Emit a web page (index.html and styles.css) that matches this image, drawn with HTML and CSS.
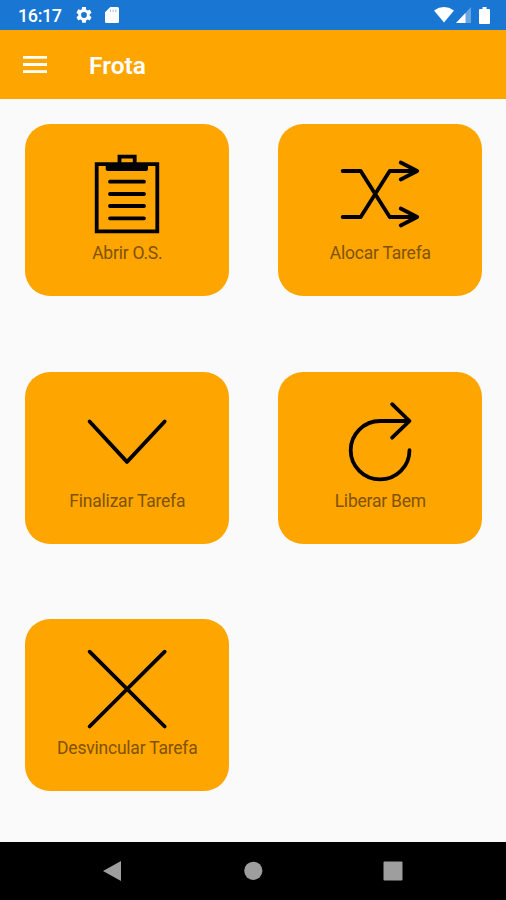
FILE: index.html
```
<!DOCTYPE html>
<html lang="pt-BR">
<head>
<meta charset="utf-8">
<title>Frota</title>
<link rel="stylesheet" href="styles.css">
</head>
<body>
<div class="status-bar">
  <span class="clock">16:17</span>
  <svg class="gear" viewBox="2 2 20 20"><path d="M19.14 12.94c.04-.3.06-.61.06-.94s-.02-.64-.07-.94l2.03-1.58a.49.49 0 0 0 .12-.61l-1.92-3.32a.49.49 0 0 0-.59-.22l-2.39.96a7 7 0 0 0-1.62-.94l-.36-2.54A.48.48 0 0 0 13.92 2h-3.84c-.24 0-.43.17-.47.41l-.36 2.54c-.59.24-1.13.57-1.62.94l-2.39-.96a.49.49 0 0 0-.59.22L2.74 8.87c-.12.21-.08.47.12.61l2.03 1.58a6 6 0 0 0 0 1.88l-2.03 1.58a.49.49 0 0 0-.12.61l1.92 3.32c.12.22.37.29.59.22l2.39-.96c.5.38 1.03.7 1.62.94l.36 2.54c.05.24.24.41.48.41h3.84c.24 0 .44-.17.47-.41l.36-2.54a7 7 0 0 0 1.62-.94l2.39.96c.22.08.47 0 .59-.22l1.92-3.32a.49.49 0 0 0-.12-.61zM12 15.6a3.6 3.6 0 1 1 0-7.2 3.6 3.6 0 0 1 0 7.2z"/></svg>
  <svg class="sd" viewBox="0 0 14 16"><path d="M5.3 0H12.5Q14 0 14 1.5V14.500Q14 16 12.500 16H1.500Q0 16 0 14.500V5.300Z"/><path class="slots" d="M5.500 2.500V5M8.200 2.500V5M10.900 2.500V5"/></svg>
  <span class="spacer"></span>
  <svg class="wifi" viewBox="0 0 20 16"><path d="M0 3.500Q10-3.300 20 3.500L10 15.500Z"/></svg>
  <svg class="signal" viewBox="0 0 15 16"><path class="faint" d="M15 0V16H0Z"/><path d="M9.500 5.900V16H0Z"/></svg>
  <svg class="battery" viewBox="0 0 11 17"><path d="M3.500 0H7.500V2H10Q11 2 11 3V16Q11 17 10 17H1Q0 17 0 16V3Q0 2 1 2H3.500Z"/></svg>
</div>
<header class="app-bar">
  <svg class="menu" viewBox="0 0 24 18"><path d="M0 0H24V2.800H0ZM0 7.100H24V9.900H0ZM0 14.200H24V17H0Z"/></svg>
  <h1>Frota</h1>
</header>
<main class="grid">
  <div class="card">
    <svg class="icon" viewBox="87.300 154 80 80"><path class="miter" d="M97 164.200H157.600V231.300H97ZM119.800 163V156.700H135V163"/><path class="solid" d="M106 163H148.300V169Q148.300 171 146.300 171H108Q106 171 106 169Z"/><path d="M110.300 181.700H144.300M110.300 194H144.300M110.300 206H144.300M110.300 218.300H144.300"/></svg>
    <span class="label">Abrir O.S.</span>
  </div>
  <div class="card">
    <svg class="icon" viewBox="340.300 154 80 80"><path d="M343 171H361L390 217H417M343 217H361L390 171H417M401 162.500L417.500 171L401 179.500M401 208.500L417.500 217L401 225.500"/></svg>
    <span class="label">Alocar Tarefa</span>
  </div>
  <div class="card">
    <svg class="icon" viewBox="87.300 401.800 80 80"><path d="M89.900 421.300L127.300 461.700L165 421.300"/></svg>
    <span class="label">Finalizar Tarefa</span>
  </div>
  <div class="card">
    <svg class="icon" viewBox="340.300 401.800 80 80"><path d="M409.800 450A29.400 29.200 0 1 1 380.400 420.800H409M392.400 404L409.800 420.800L392.400 437.500"/></svg>
    <span class="label">Liberar Bem</span>
  </div>
  <div class="card">
    <svg class="icon" viewBox="87.300 649 80 80"><path d="M89.900 651.700L165 726.500M165 651.700L89.900 726.500"/></svg>
    <span class="label">Desvincular Tarefa</span>
  </div>
</main>
<nav class="nav-bar">
  <svg viewBox="0 0 20 20"><path d="M1 10L19 0V20Z"/></svg>
  <svg viewBox="0 0 20 20"><circle cx="10.300" cy="9.800" r="9.100"/></svg>
  <svg viewBox="0 0 20 20"><rect x=".5" y=".5" width="19" height="19" rx="1"/></svg>
</nav>
</body>
</html>
```
FILE: styles.css
```
* { box-sizing: border-box; }
body {
  margin: 0;
  height: 900px;
  display: flex;
  flex-direction: column;
  background: #fafafa;
  font-family: Roboto, "Liberation Sans", sans-serif;
}
svg { display: block; flex: none; }
.status-bar {
  height: 30px;
  padding: 0 16px 0 18px;
  display: flex;
  align-items: center;
  background: #1976d2;
  color: #fff;
  fill: #fff;
}
.clock { width: 58px; font-size: 18px; font-weight: 500; letter-spacing: -.4px; line-height: 30px; padding-top: 2px; }
.gear { width: 16px; height: 16px; }
.sd { width: 14px; height: 16px; margin-left: 13px; }
.slots { stroke: #1976d2; stroke-width: 1; opacity: .45; }
.spacer { flex: 1; }
.wifi { width: 20px; height: 16px; }
.signal { width: 15px; height: 16px; margin: 0 8px 0 2px; }
.battery { width: 11px; height: 17px; }
.faint { opacity: .35; }
.app-bar {
  height: 69px;
  padding-left: 23px;
  display: flex;
  align-items: center;
  background: #ffa500;
  color: #fff;
  fill: #fff;
}
.menu { width: 24px; height: 18px; }
h1 { margin: 2px 0 0 42px; font-size: 24.5px; font-weight: 600; line-height: 28px; }
.grid {
  flex: 1;
  padding: 25px 0 0 25.3px;
  display: grid;
  grid-template-columns: 204px 204px;
  grid-auto-rows: 172px;
  gap: 75.5px 49px;
  align-content: start;
}
.card {
  padding-top: 30px;
  display: flex;
  flex-direction: column;
  align-items: center;
  background: #ffa500;
  border-radius: 25px;
}
.icon {
  width: 80px;
  height: 80px;
  fill: none;
  stroke: #000;
  stroke-width: 3.8;
  stroke-linecap: round;
  stroke-linejoin: round;
  overflow: visible;
}
.miter { stroke-linejoin: miter; stroke-linecap: butt; }
.solid { fill: #000; stroke: none; }
.label {
  margin-top: 9px;
  font-size: 17.5px;
  letter-spacing: -.22px;
  line-height: 20px;
  color: #805300;
  white-space: nowrap;
}
.nav-bar {
  height: 58px;
  padding: 0 103px 0 102px;
  display: flex;
  align-items: center;
  justify-content: space-between;
  background: #000;
  fill: #9e9e9e;
}
.nav-bar svg { width: 20px; height: 20px; }
```
